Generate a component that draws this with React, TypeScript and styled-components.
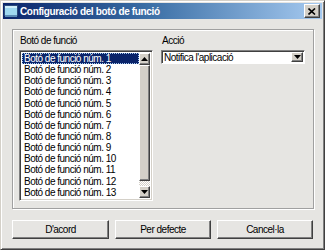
import styled, { createGlobalStyle } from 'styled-components'

const GlobalStyle = createGlobalStyle`
    html, body {
        margin: 0;
        padding: 0;
        background: #d4d0c8;
    }
    * {
        box-sizing: border-box;
    }
`

const Window = styled.div`
    width: 325px;
    height: 250px;
    display: flex;
    flex-direction: column;
    background: #e6e5e2;
    border: 1px solid #404040;
    border-top-color: #d4d0c8;
    border-left-color: #d4d0c8;
    box-shadow: inset 1px 1px 0 #fff, inset -1px -1px 0 #808080;
    padding: 2px;
    font-family: 'Liberation Sans', Arial, sans-serif;
    font-size: 10px;
    letter-spacing: -0.5px;
    color: #000;
`

const TitleBar = styled.div`
    height: 16px;
    display: flex;
    align-items: center;
    padding: 0 2px 0 1px;
    background: linear-gradient(90deg, #0a246a 0%, #3a6ea5 45%, #a6caf0 100%);
    color: #fff;
    font-weight: bold;
    font-size: 10px;
    letter-spacing: -0.35px;
    gap: 2px;
`

const TitleText = styled.span`
    flex: 1;
    white-space: nowrap;
`

const CloseButton = styled.div`
    width: 16px;
    height: 14px;
    display: flex;
    align-items: center;
    justify-content: center;
    background: #d4d0c8;
    border: 1px solid #404040;
    border-top-color: #fff;
    border-left-color: #fff;
    box-shadow: inset -1px -1px 0 #808080;
`

const Content = styled.div`
    flex: 1;
    display: flex;
    flex-direction: column;
    padding: 10px 8px 0 9px;
`

const Group = styled.div`
    height: 180px;
    border: 1px solid #a0a0a0;
    box-shadow: 1px 1px 0 #fff, inset 1px 1px 0 #fff;
    display: grid;
    grid-template-columns: 134px 1fr;
    column-gap: 8px;
    padding: 5px 8px 0 6px;
`

const Column = styled.div`
    display: flex;
    flex-direction: column;
`

const Label = styled.div`
    height: 15px;
    padding-left: 1px;
    line-height: 11px;
`

const ListBox = styled.div`
    height: 151px;
    display: flex;
    background: #fff;
    border: 1px solid #808080;
    border-right-color: #fff;
    border-bottom-color: #fff;
    box-shadow: inset 1px 1px 0 #404040, inset -1px -1px 0 #d4d0c8;
    padding: 2px;
    overflow: hidden;
`

const Items = styled.div`
    flex: 1;
    overflow: hidden;
`

const Item = styled.div<{ $selected?: boolean }>`
    height: 11.15px;
    line-height: 11px;
    padding-left: 2px;
    white-space: nowrap;
    background: ${p => (p.$selected ? '#0a246a' : 'transparent')};
    color: ${p => (p.$selected ? '#fff' : '#000')};
    outline: ${p => (p.$selected ? '1px dotted #a6caf0' : 'none')};
    outline-offset: -1px;
`

const ScrollBar = styled.div`
    width: 11px;
    display: flex;
    flex-direction: column;
`

const ArrowButton = styled.div`
    height: 12px;
    display: flex;
    align-items: center;
    justify-content: center;
    background: #d4d0c8;
    border: 1px solid #404040;
    border-top-color: #fff;
    border-left-color: #fff;
    box-shadow: inset -1px -1px 0 #808080;
`

const Thumb = styled.div`
    height: 116px;
    background: #d4d0c8;
    border: 1px solid #404040;
    border-top-color: #fff;
    border-left-color: #fff;
    box-shadow: inset -1px -1px 0 #808080;
`

const Track = styled.div`
    flex: 1;
    background-color: #eeede9;
    background-image: repeating-conic-gradient(#d4d0c8 0 25%, #fff 0 50%);
    background-size: 2px 2px;
`

const Combo = styled.div`
    height: 14px;
    width: 144px;
    display: flex;
    align-items: center;
    background: #fff;
    border: 1px solid #808080;
    border-right-color: #fff;
    border-bottom-color: #fff;
    box-shadow: inset 1px 1px 0 #404040;
    padding: 0 1px 0 2px;
`

const ComboText = styled.span`
    flex: 1;
    white-space: nowrap;
`

const ComboArrow = styled(ArrowButton)`
    width: 12px;
    height: 10px;
`

const Buttons = styled.div`
    display: grid;
    grid-template-columns: 97px 96px 96px;
    column-gap: 6px;
    margin-top: 11px;
    margin-right: 2px;
`

const Button = styled.div`
    height: 19px;
    display: flex;
    align-items: center;
    justify-content: center;
    background: #e6e5e2;
    border: 1px solid #404040;
    border-top-color: #fff;
    border-left-color: #fff;
    box-shadow: inset -1px -1px 0 #808080;
`

function Arrow ({ down }: { down?: boolean }) {
    return (
        <svg width='7' height='4' viewBox='0 0 7 4'>
            <path d={down ? 'M0 0h7L3.5 4z' : 'M0 4h7L3.5 0z'} fill='#000' />
        </svg>
    )
}

function WindowIcon () {
    return (
        <svg width='14' height='14' viewBox='0 0 14 14'>
            <rect x='0.5' y='1.5' width='13' height='10' fill='#9fd8f0' stroke='#2c4a7a' />
            <rect x='1' y='2' width='12' height='2' fill='#cfeefa' />
            <rect x='1' y='11' width='12' height='2' fill='#5b8bb5' />
        </svg>
    )
}

const items = Array.from({ length: 14 }, (_, i) => `Botó de funció núm. ${i + 1}`)

function App () {
    return (
        <>
            <GlobalStyle />
            <Window>
                <TitleBar>
                    <WindowIcon />
                    <TitleText>Configuració del botó de funció</TitleText>
                    <CloseButton>
                        <svg width='8' height='7' viewBox='0 0 8 7'>
                            <path d='M0.5 0.5L7 6.5M7 0.5L0.5 6.5' stroke='#000' strokeWidth='1.6' />
                        </svg>
                    </CloseButton>
                </TitleBar>
                <Content>
                    <Group>
                        <Column>
                            <Label>Botó de funció</Label>
                            <ListBox>
                                <Items>
                                    {items.map((text, i) => (
                                        <Item key={text} $selected={i === 0}>{text}</Item>
                                    ))}
                                </Items>
                                <ScrollBar>
                                    <ArrowButton><Arrow /></ArrowButton>
                                    <Thumb />
                                    <Track />
                                    <ArrowButton><Arrow down /></ArrowButton>
                                </ScrollBar>
                            </ListBox>
                        </Column>
                        <Column>
                            <Label>Acció</Label>
                            <Combo>
                                <ComboText>Notifica l'aplicació</ComboText>
                                <ComboArrow><Arrow down /></ComboArrow>
                            </Combo>
                        </Column>
                    </Group>
                    <Buttons>
                        <Button>D'acord</Button>
                        <Button>Per defecte</Button>
                        <Button>Cancel·la</Button>
                    </Buttons>
                </Content>
            </Window>
        </>
    )
}

export default App
